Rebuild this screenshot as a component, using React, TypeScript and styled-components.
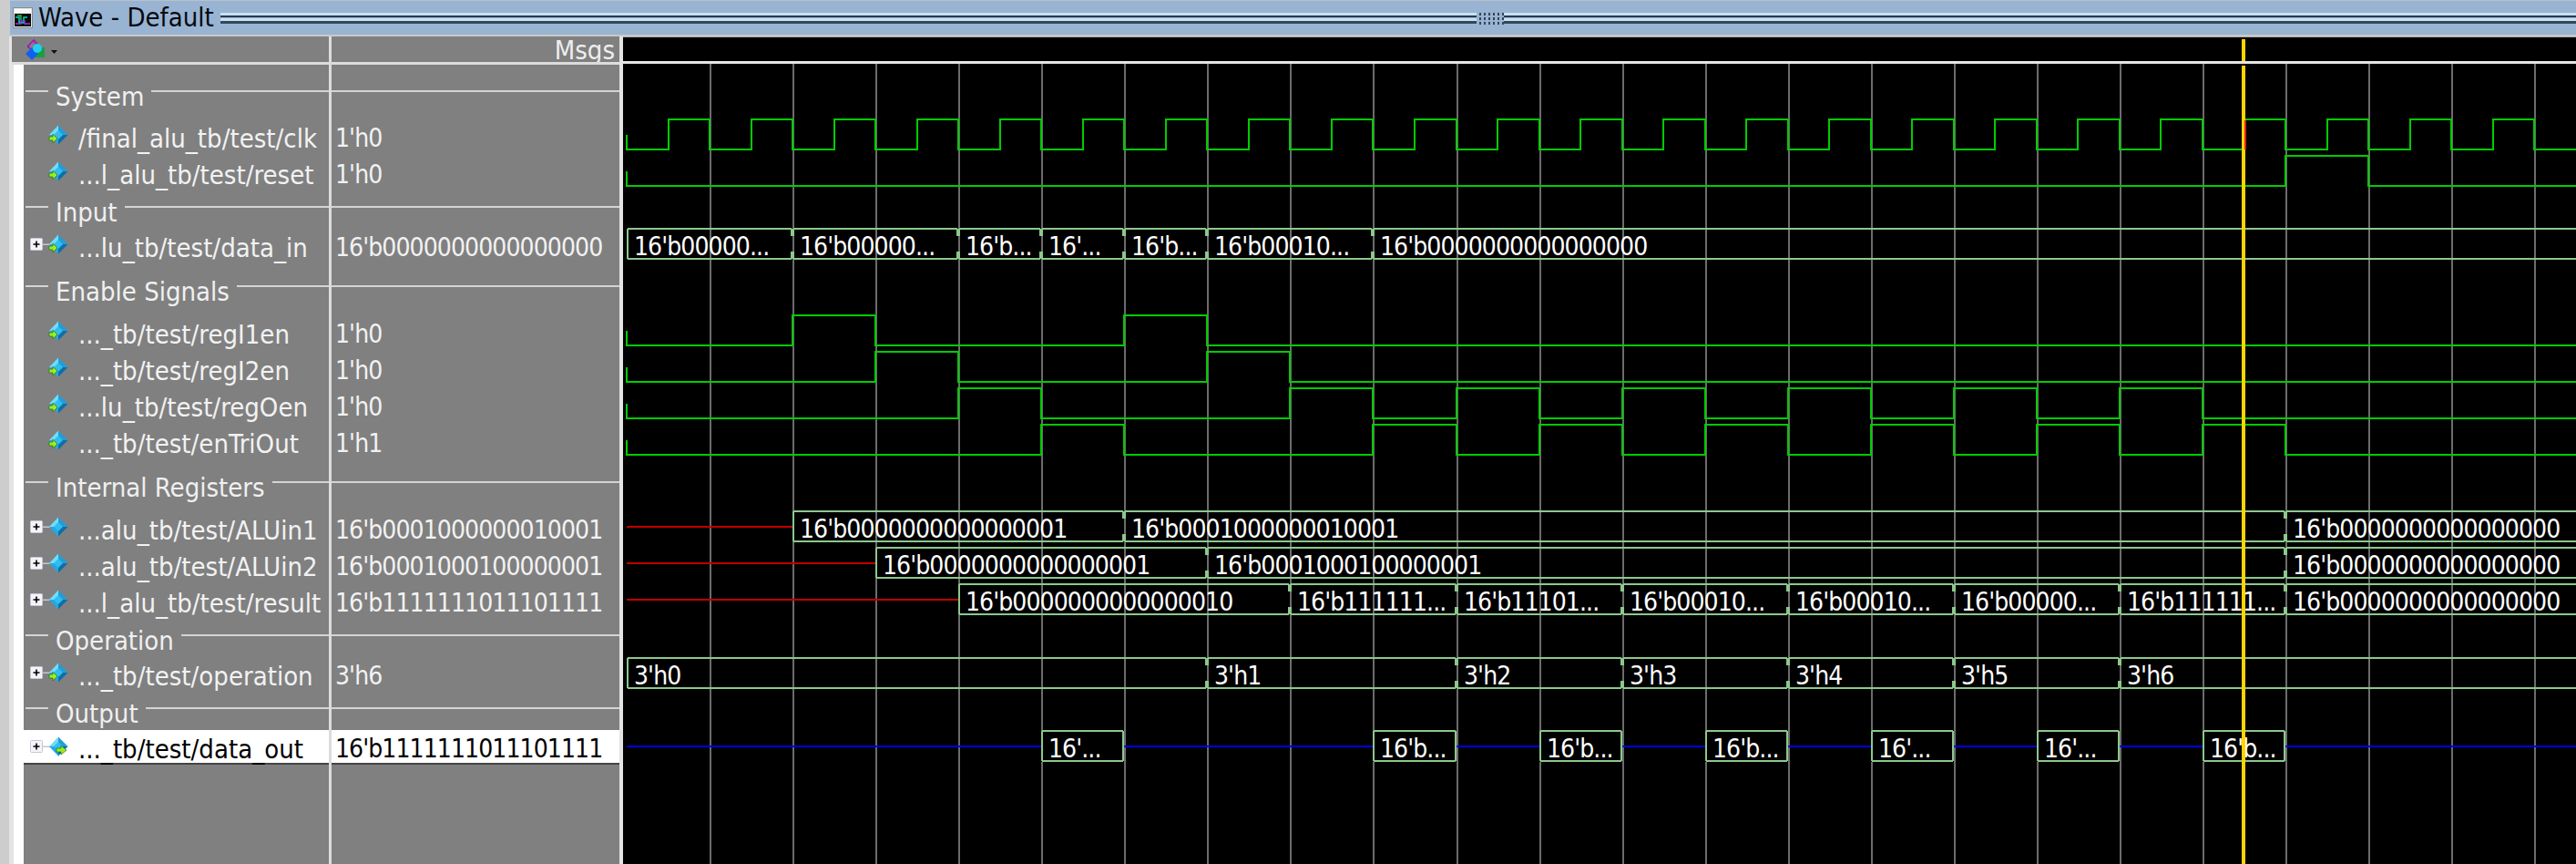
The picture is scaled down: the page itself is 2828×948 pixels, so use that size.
import styled, { createGlobalStyle } from "styled-components";

const GlobalStyle = createGlobalStyle`
  html, body {
    margin: 0;
    padding: 0;
    background: #000;
  }
`;

const FONT = `"DejaVu Sans Condensed", "DejaVu Sans", "Liberation Sans", sans-serif`;
const LABEL_SIZE = "29px";
const VALUE_SIZE = "28px";
const VALUE_SPACING = "-0.9px";

// time axis of the wave pane, in page pixels
const T0 = 688;
const STEP = 91.05;
const tx = (n: number) => Math.round(T0 + n * STEP);
const RIGHT = 2828;
const CURSOR_X = 2461;

const Window = styled.div`
  width: 2828px;
  height: 948px;
  display: flex;
  flex-direction: column;
  overflow: hidden;
  background: #cdcdcd;
  font-family: ${FONT};
  font-stretch: condensed;
`;

const TitleBar = styled.div`
  height: 37px;
  margin-left: 11px;
  padding-left: 3px;
  display: flex;
  align-items: center;
  background: #98b4d2;
  border-top: 1px solid #b9c0c8;
  border-bottom: 2px solid #cacaca;
`;

const TitleText = styled.span`
  margin-left: 6px;
  font-size: ${LABEL_SIZE};
  line-height: 37px;
  color: #06090f;
  white-space: nowrap;
`;

const Gripper = styled.div`
  flex: 1;
  margin-left: 7px;
  margin-top: 1px;
  display: flex;
  height: 13px;
`;

const GripLine = styled.div`
  flex: ${(p) => (p.$fill ? "1 1 0" : "0 0 1379px")};
  background: linear-gradient(
    to bottom,
    #c6e2f2 0 3px,
    #2a3a4c 3px 5px,
    #98b4d2 5px 6px,
    #c6e2f2 6px 9px,
    #34465a 9px 12px,
    #98b4d2 12px
  );
`;

const GripDots = styled.div`
  width: 30px;
  background:
    repeating-linear-gradient(to bottom, transparent 0 3px, #98b4d2 3px 5px),
    repeating-linear-gradient(to right, #98b4d2 0 3px, #34465a 3px 5px);
`;

const Body = styled.div`
  flex: 1;
  display: flex;
  min-height: 0;
`;

const Sidebar = styled.div`
  width: 674px;
  margin-left: 10px;
  padding-right: 4px;
  box-sizing: border-box;
  display: flex;
  flex-direction: column;
  background: #e4e4e4;
`;

const HeaderRow = styled.div`
  height: 31px;
  margin-left: 3px;
  position: relative;
  display: grid;
  grid-template-columns: 348px 319px;
  background: #808080;

  /* the rule lies over the descender of the Msgs label, as in the tool */
  &::after {
    content: "";
    position: absolute;
    left: 0;
    right: 0;
    bottom: 0;
    height: 3px;
    background: #dcdcdc;
  }
`;

const HeaderTools = styled.div`
  padding: 3px 0 0 14px;
`;

const HeaderValue = styled.div`
  border-left: 3px solid #dcdcdc;
  padding-right: 5px;
  text-align: right;
  font-size: ${LABEL_SIZE};
  line-height: 30px;
  color: #eeeeee;
`;

const Rows = styled.div`
  flex: 1;
  margin-left: 5px;
  border-left: 11px solid #ffffff;
  display: flex;
  flex-direction: column;
  background: #808080;
`;

const GroupRow = styled.div`
  height: ${(p) => p.$height}px;
  box-sizing: border-box;
  display: grid;
  grid-template-columns: 335px 319px;
  color: #f0f0f0;
`;

const GroupName = styled.div`
  padding-top: ${(p) => p.$line}px;
  padding-left: 2px;
  display: flex;
  align-items: flex-start;
`;

const GroupValue = styled.div`
  padding-top: ${(p) => p.$line}px;
  border-left: 3px solid #dcdcdc;
`;

const Rule = styled.div`
  height: 2px;
  flex: ${(p) => (p.$short ? "0 0 25px" : 1)};
  background: #d4d4d4;
`;

const GroupLabel = styled.span`
  margin: -9px 8px 0;
  font-size: ${LABEL_SIZE};
  line-height: 32px;
  white-space: nowrap;
`;

const SignalRow = styled.div`
  height: 40px;
  display: grid;
  grid-template-columns: 335px 319px;
  color: ${(p) => (p.$selected ? "#000000" : "#f2f2f2")};
`;

const NameCell = styled.div`
  display: flex;
  align-items: flex-start;
  padding-left: 7px;
  overflow: hidden;
  white-space: nowrap;
  font-size: ${LABEL_SIZE};
  line-height: 44px;
  background: ${(p) => (p.$selected ? "#ffffff" : "transparent")};
  height: ${(p) => (p.$selected ? "38px" : "40px")};
  margin-top: ${(p) => (p.$selected ? "1px" : "0")};
  box-shadow: ${(p) => (p.$selected ? "inset 0 -2px 0 #444444" : "none")};
`;

const NameText = styled.span`
  margin-left: 11px;
  margin-top: ${(p) => (p.$selected ? "-1px" : "0")};
`;

const ValueCell = styled.div`
  border-left: 3px solid #dcdcdc;
`;

const ValueText = styled.div`
  padding-left: 4px;
  font-size: ${VALUE_SIZE};
  letter-spacing: ${VALUE_SPACING};
  line-height: ${(p) => (p.$selected ? "42px" : "44px")};
  white-space: nowrap;
  background: ${(p) => (p.$selected ? "#ffffff" : "transparent")};
  height: ${(p) => (p.$selected ? "38px" : "40px")};
  margin-top: ${(p) => (p.$selected ? "1px" : "0")};
  box-shadow: ${(p) => (p.$selected ? "inset 0 -2px 0 #444444" : "none")};
  box-sizing: border-box;
`;

const FillRow = styled.div`
  flex: 1;
  display: grid;
  grid-template-columns: 335px 319px;
`;

const SignalIconSvg = styled.svg`
  flex: none;
  margin-top: 7px;
`;

const WavePane = styled.div`
  flex: 1;
  min-width: 0;
  background: #000;
`;

const WaveCanvas = styled.svg`
  display: block;
`;

const BusLabel = styled.text`
  font-family: ${FONT};
  font-stretch: condensed;
  font-size: ${VALUE_SIZE};
  letter-spacing: ${VALUE_SPACING};
  fill: #ffffff;
`;

const TitleIcon = () => (
  <svg width="22" height="23" viewBox="0 0 22 23">
    <rect x="0.5" y="0.5" width="21" height="22" fill="#e8e8e8" stroke="#8a8a8a" />
    <rect x="2" y="2" width="18" height="4" fill="#f8f8f8" />
    <rect x="2" y="7" width="18" height="14" fill="#0a0a0a" />
    <path d="M3 11h4v6h5v-6h4" fill="none" stroke="#12d0c0" strokeWidth="1.5" />
    <path d="M3 18h6v-3h4v3h6" fill="none" stroke="#8844cc" strokeWidth="1.5" />
    <path d="M5 9h4v5" fill="none" stroke="#20c040" strokeWidth="1.5" />
  </svg>
);

const ToolsIcon = () => (
  <svg width="36" height="23" viewBox="0 0 36 23">
    <path d="M10 0.5 L17 8 L10 14 L3 8 Z" fill="#c020d0" stroke="#8010a0" />
    <path d="M9 3 L14 8 L9 12 L5 8 Z" fill="#808080" />
    <rect x="11" y="9" width="11" height="11" fill="#18a040" />
    <path d="M8 9 L15 16 L8 23 L1 16 Z" fill="#1060f0" />
    <circle cx="14" cy="10" r="5" fill="#20d0f0" />
    <path d="M29 12 h7 l-3.5 4 Z" fill="#101010" />
  </svg>
);

// a signal's icon: optional expander box, diamond, optional direction arrow
const SignalIcon = ({ expand, dir }: { expand?: boolean; dir?: "in" | "out" }) => (
  <SignalIconSvg width="42" height="22" viewBox="0 0 42 22">
    {expand && (
      <>
        <rect x="14" y="10.5" width="8" height="1.5" fill="#c8c8c8" />
        <rect x="0.5" y="4.5" width="13" height="13" rx="1" fill="#f4f4fa" stroke="#c4c8d8" />
        <path d="M3.5 11h7M7 7.5v7" stroke="#000" strokeWidth="1.6" />
      </>
    )}
    <path d="M31 0.5 L31 11 L21 11 Z" fill="#72dcf8" />
    <path d="M31 0.5 L41.5 11 L31 11 Z" fill="#1e9fdc" />
    <path d="M21 11 L31 11 L31 21.5 Z" fill="#22a8e6" />
    <path d="M41.5 11 L31 11 L31 21.5 Z" fill="#0f6ea6" />
    <path d="M31 6 L36 11 L31 16 L26 11 Z" fill="#30bdf0" />
    {dir === "in" && (
      <path d="M21 13 h4 v-3 l5 5 -5 5 v-3 h-4 Z" fill="#9aee20" stroke="#207020" strokeWidth="0.7" />
    )}
    {dir === "out" && (
      <path d="M29 13 h5 v-3 l6 5 -6 5 v-3 h-5 Z" fill="#9aee20" stroke="#207020" strokeWidth="0.7" />
    )}
  </SignalIconSvg>
);

type GroupItem = { kind: "group"; label: string; height: number; line: number };
type SigItem = {
  kind: "signal";
  name: string;
  value: string;
  expand?: boolean;
  dir?: "in" | "out";
  selected?: boolean;
};

const items: (GroupItem | SigItem)[] = [
  { kind: "group", label: "System", height: 59, line: 28 },
  { kind: "signal", name: "/final_alu_tb/test/clk", value: "1'h0", dir: "in" },
  { kind: "signal", name: "...l_alu_tb/test/reset", value: "1'h0", dir: "in" },
  { kind: "group", label: "Input", height: 40, line: 16 },
  { kind: "signal", name: "...lu_tb/test/data_in", value: "16'b0000000000000000", expand: true, dir: "in" },
  { kind: "group", label: "Enable Signals", height: 55, line: 23 },
  { kind: "signal", name: "..._tb/test/regI1en", value: "1'h0", dir: "in" },
  { kind: "signal", name: "..._tb/test/regI2en", value: "1'h0", dir: "in" },
  { kind: "signal", name: "...lu_tb/test/regOen", value: "1'h0", dir: "in" },
  { kind: "signal", name: "..._tb/test/enTriOut", value: "1'h1", dir: "in" },
  { kind: "group", label: "Internal Registers", height: 55, line: 23 },
  { kind: "signal", name: "...alu_tb/test/ALUin1", value: "16'b0001000000010001", expand: true },
  { kind: "signal", name: "...alu_tb/test/ALUin2", value: "16'b0001000100000001", expand: true },
  { kind: "signal", name: "...l_alu_tb/test/result", value: "16'b1111111011101111", expand: true },
  { kind: "group", label: "Operation", height: 40, line: 16 },
  { kind: "signal", name: "..._tb/test/operation", value: "3'h6", expand: true, dir: "in" },
  { kind: "group", label: "Output", height: 40, line: 16 },
  { kind: "signal", name: "..._tb/test/data_out", value: "16'b1111111011101111", expand: true, dir: "out", selected: true },
];

const clockHighs: [number, number][] = Array.from({ length: 24 }, (_, i) => [i + 0.5, i + 1]);

const levels: { top: number; highs: [number, number][] }[] = [
  { top: 130, highs: clockHighs },
  { top: 170, highs: [[20, 21]] },
  { top: 345, highs: [[2, 3], [6, 7]] },
  { top: 385, highs: [[3, 4], [7, 8]] },
  { top: 425, highs: [[4, 5], [8, 9], [10, 11], [12, 13], [14, 15], [16, 17], [18, 19]] },
  { top: 465, highs: [[5, 6], [9, 10], [11, 12], [13, 14], [15, 16], [17, 18], [19, 20]] },
];

const levelPath = (top: number, highs: [number, number][]) => {
  const hi = top + 1;
  const lo = top + 34;
  let d = `M${T0} ${top + 18}V${lo}`;
  highs.forEach(([a, b]) => {
    if (tx(a) >= RIGHT) return;
    d += `H${tx(a)}V${hi}H${Math.min(tx(b), RIGHT)}`;
    if (tx(b) < RIGHT) d += `V${lo}`;
  });
  return d + `H${RIGHT}`;
};

type Seg = { from: number; to?: number; text: string; solid?: boolean };

const buses: { top: number; lead?: string; segs: Seg[] }[] = [
  {
    top: 251,
    segs: [
      { from: 0, to: 2, text: "16'b00000...", solid: true },
      { from: 2, to: 4, text: "16'b00000..." },
      { from: 4, to: 5, text: "16'b..." },
      { from: 5, to: 6, text: "16'..." },
      { from: 6, to: 7, text: "16'b..." },
      { from: 7, to: 9, text: "16'b00010..." },
      { from: 9, text: "16'b0000000000000000" },
    ],
  },
  {
    top: 561,
    lead: "#c00000",
    segs: [
      { from: 2, to: 6, text: "16'b0000000000000001", solid: true },
      { from: 6, to: 20, text: "16'b0001000000010001" },
      { from: 20, text: "16'b0000000000000000" },
    ],
  },
  {
    top: 601,
    lead: "#c00000",
    segs: [
      { from: 3, to: 7, text: "16'b0000000000000001", solid: true },
      { from: 7, to: 20, text: "16'b0001000100000001" },
      { from: 20, text: "16'b0000000000000000" },
    ],
  },
  {
    top: 641,
    lead: "#c00000",
    segs: [
      { from: 4, to: 8, text: "16'b0000000000000010", solid: true },
      { from: 8, to: 10, text: "16'b111111..." },
      { from: 10, to: 12, text: "16'b11101..." },
      { from: 12, to: 14, text: "16'b00010..." },
      { from: 14, to: 16, text: "16'b00010..." },
      { from: 16, to: 18, text: "16'b00000..." },
      { from: 18, to: 20, text: "16'b111111..." },
      { from: 20, text: "16'b0000000000000000" },
    ],
  },
  {
    top: 722,
    segs: [
      { from: 0, to: 7, text: "3'h0", solid: true },
      { from: 7, to: 10, text: "3'h1" },
      { from: 10, to: 12, text: "3'h2" },
      { from: 12, to: 14, text: "3'h3" },
      { from: 14, to: 16, text: "3'h4" },
      { from: 16, to: 18, text: "3'h5" },
      { from: 18, text: "3'h6" },
    ],
  },
];

const dataOut: Seg[] = [
  { from: 5, to: 6, text: "16'..." },
  { from: 9, to: 10, text: "16'b..." },
  { from: 11, to: 12, text: "16'b..." },
  { from: 13, to: 14, text: "16'b..." },
  { from: 15, to: 16, text: "16'..." },
  { from: 17, to: 18, text: "16'..." },
  { from: 19, to: 20, text: "16'b..." },
];

const segPath = (top: number, seg: Seg, solidEnd = false) => {
  const x0 = tx(seg.from) + 1;
  const x1 = seg.to === undefined ? RIGHT : tx(seg.to) - 1;
  const b = top + 33;
  let d = `M${x0} ${top}H${x1}M${x0} ${b}H${x1}`;
  d += seg.solid ? `M${x0} ${top}V${b}` : `M${x0} ${top}v8M${x0} ${b}v-8`;
  if (seg.to !== undefined) {
    d += solidEnd ? `M${x1} ${top}V${b}` : `M${x1} ${top}v8M${x1} ${b}v-8`;
  }
  return d;
};

const BusSegment = ({ top, seg, solidEnd }: { top: number; seg: Seg; solidEnd?: boolean }) => (
  <>
    <path d={segPath(top, seg, solidEnd)} fill="none" stroke="#8cc88c" strokeWidth="2" shapeRendering="crispEdges" />
    <BusLabel x={tx(seg.from) + 8} y={top + 29}>
      {seg.text}
    </BusLabel>
  </>
);

const Waves = () => {
  const grid = Array.from({ length: 23 }, (_, i) => tx(i + 1));
  return (
    <WaveCanvas width="2144" height="908" viewBox="684 40 2144 908">
      <rect x="684" y="40" width="2144" height="1" fill="#b0b0b0" shapeRendering="crispEdges" />
      {grid.map((x) => (
        <rect key={x} x={x} y="70" width="2" height="878" fill="#6c6c6c" shapeRendering="crispEdges" />
      ))}
      <rect x="684" y="67" width="2144" height="3" fill="#e4e4e4" shapeRendering="crispEdges" />

      {levels.map((l) => (
        <path
          key={l.top}
          d={levelPath(l.top, l.highs)}
          fill="none"
          stroke="#00cc00"
          strokeWidth="2"
          shapeRendering="crispEdges"
        />
      ))}

      {buses.map((bus) => (
        <g key={bus.top}>
          {bus.lead && (
            <rect
              x={T0}
              y={bus.top + 16}
              width={tx(bus.segs[0].from) - T0}
              height="2"
              fill={bus.lead}
              shapeRendering="crispEdges"
            />
          )}
          {bus.segs.map((seg) => (
            <BusSegment key={seg.from} top={bus.top} seg={seg} />
          ))}
        </g>
      ))}

      <rect x={T0} y="818" width={RIGHT - T0} height="2" fill="#0000e0" shapeRendering="crispEdges" />
      {dataOut.map((seg) => (
        <g key={seg.from}>
          <rect x={tx(seg.from)} y="803" width={tx(seg.to as number) - tx(seg.from)} height="33" fill="#000" />
          <BusSegment top={802} seg={{ ...seg, solid: true }} solidEnd />
        </g>
      ))}

      <rect x={CURSOR_X} y="43" width="4" height="24" fill="#ffd400" shapeRendering="crispEdges" />
      <rect x={CURSOR_X} y="72" width="4" height="876" fill="#ffd400" shapeRendering="crispEdges" />
      <rect x={CURSOR_X + 3} y="132" width="2" height="32" fill="#e02020" shapeRendering="crispEdges" />
    </WaveCanvas>
  );
};

const App = () => (
  <Window>
    <GlobalStyle />
    <TitleBar>
      <TitleIcon />
      <TitleText>Wave - Default</TitleText>
      <Gripper>
        <GripLine />
        <GripDots />
        <GripLine $fill />
      </Gripper>
    </TitleBar>
    <Body>
      <Sidebar>
        <HeaderRow>
          <HeaderTools>
            <ToolsIcon />
          </HeaderTools>
          <HeaderValue>Msgs</HeaderValue>
        </HeaderRow>
        <Rows>
          {items.map((item) =>
            item.kind === "group" ? (
              <GroupRow key={item.label} $height={item.height}>
                <GroupName $line={item.line}>
                  <Rule $short />
                  <GroupLabel>{item.label}</GroupLabel>
                  <Rule />
                </GroupName>
                <GroupValue $line={item.line}>
                  <Rule />
                </GroupValue>
              </GroupRow>
            ) : (
              <SignalRow key={item.name} $selected={item.selected}>
                <NameCell $selected={item.selected}>
                  <SignalIcon expand={item.expand} dir={item.dir} />
                  <NameText $selected={item.selected}>{item.name}</NameText>
                </NameCell>
                <ValueCell>
                  <ValueText $selected={item.selected}>{item.value}</ValueText>
                </ValueCell>
              </SignalRow>
            )
          )}
          <FillRow>
            <div />
            <ValueCell />
          </FillRow>
        </Rows>
      </Sidebar>
      <WavePane>
        <Waves />
      </WavePane>
    </Body>
  </Window>
);

export default App;
